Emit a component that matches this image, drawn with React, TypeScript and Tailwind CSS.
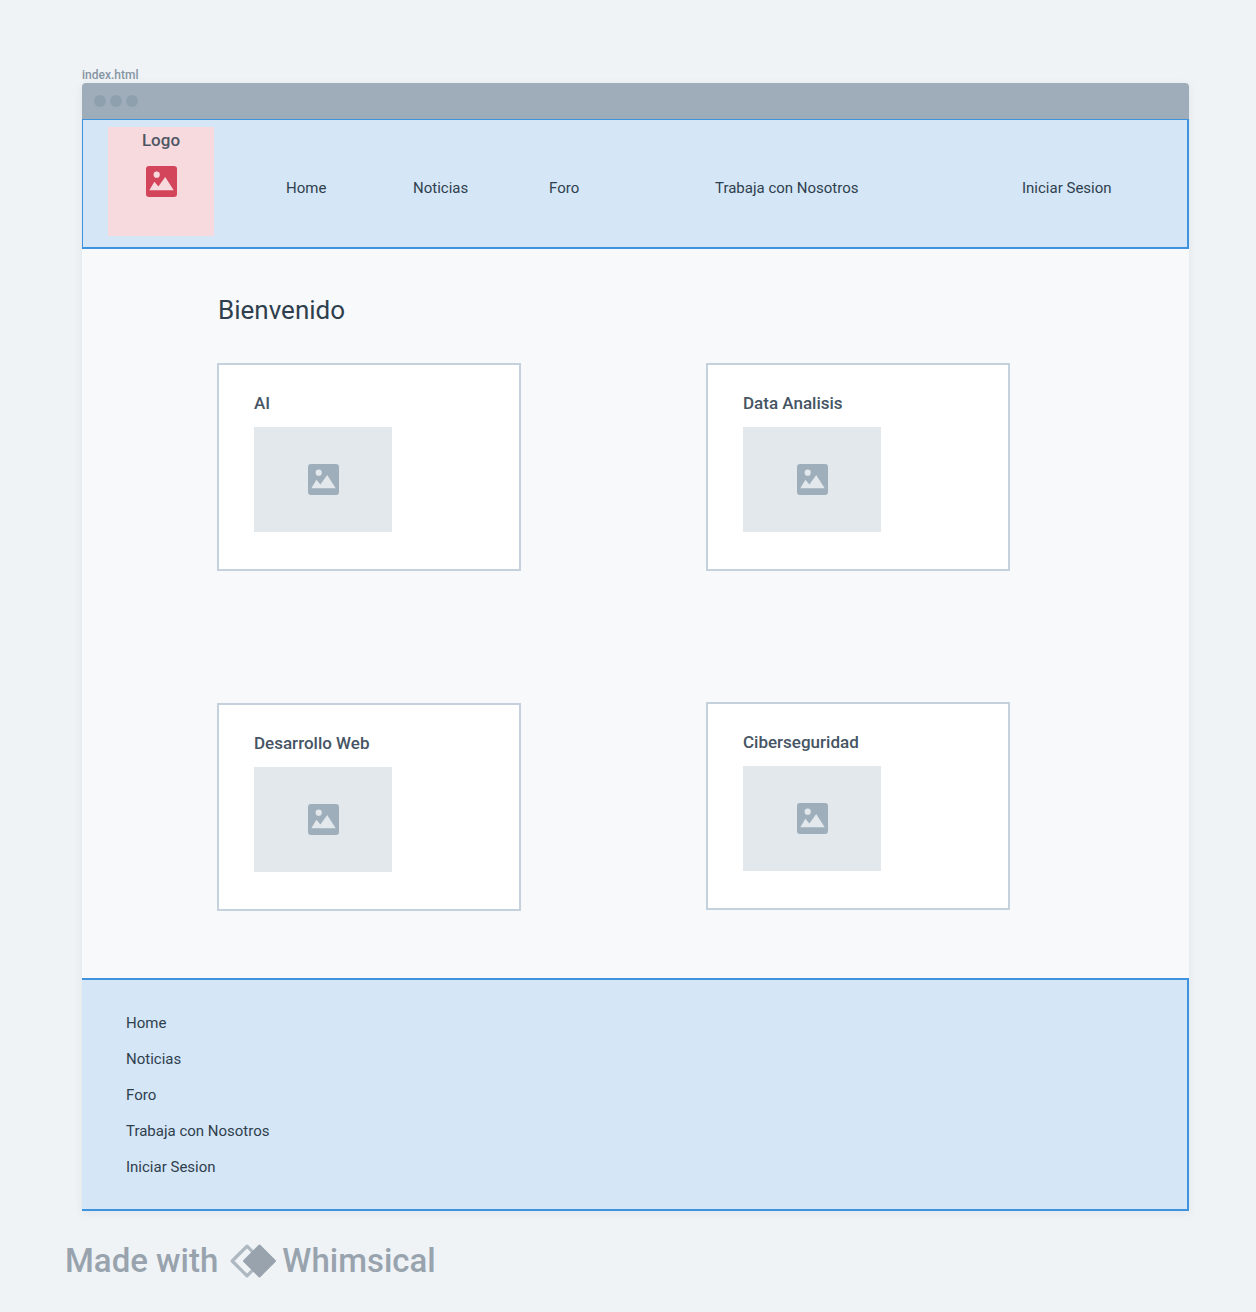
const links = ["Home", "Noticias", "Foro", "Trabaja con Nosotros", "Iniciar Sesion"];

function ImageIcon({ className }: { className: string }) {
  return (
    <svg viewBox="0 0 31 31" className={className} aria-hidden="true">
      <path
        fillRule="evenodd"
        fill="currentColor"
        d="M3 0H28A3 3 0 0 1 31 3V28A3 3 0 0 1 28 31H3A3 3 0 0 1 0 28V3A3 3 0 0 1 3 0ZM10.7 5.6A3.1 3.1 0 1 0 10.7 11.8A3.1 3.1 0 1 0 10.7 5.6ZM3.3 24.2H27.7L19.2 11L12.4 20.4L8.4 15.8Z"
      />
    </svg>
  );
}

function Card({ title }: { title: string }) {
  return (
    <article className="h-[208px] border-2 border-[#c5d1dc] bg-white px-[35px] pt-[26px]">
      <h2 className="text-[17px] leading-6 font-medium text-[#465564]">{title}</h2>
      <div className="mt-3 flex h-[105px] w-[138px] items-center justify-center bg-[#e2e8ec]">
        <ImageIcon className="size-[31px] text-[#9eaebb]" />
      </div>
    </article>
  );
}

export default function App() {
  return (
    <div className="min-h-screen bg-[#eff3f6] pt-[67px] pr-[67px] pb-[32px] pl-[82px] font-['Roboto',sans-serif]">
      <p className="text-xs leading-4 font-medium text-[#8695a3]">index.html</p>

      <div className="rounded-t shadow-[0_2px_8px_rgba(60,80,100,0.08)]">
        <div className="flex h-9 items-center gap-1 rounded-t bg-[#9eadb9] pl-3">
          <span className="size-3 rounded-full bg-[#8e9fae]" />
          <span className="size-3 rounded-full bg-[#8e9fae]" />
          <span className="size-3 rounded-full bg-[#8e9fae]" />
        </div>

        <header className="flex h-[130px] border-t border-r-2 border-b-2 border-l border-[#3d93dd] bg-[#d5e6f6] pt-[7px] pl-[25px]">
          <div className="flex h-[109px] w-[106px] shrink-0 flex-col items-center bg-[#f6dade]">
            <span className="pt-px text-[17px] leading-6 font-medium text-[#4f5663]">Logo</span>
            <ImageIcon className="mt-3.5 size-[31px] text-[#d3455b]" />
          </div>
          <nav className="ml-[72px] grid flex-1 grid-cols-[127fr_136fr_166fr_307fr_165fr] pt-[51px] text-[15px] leading-5 text-[#2f3f4e]">
            {links.map((link) => (
              <a key={link} href="#" className="whitespace-nowrap">
                {link}
              </a>
            ))}
          </nav>
        </header>

        <main className="bg-[#f8f9fb] pt-[45px] pr-[179px] pb-[67px] pl-[135px]">
          <h1 className="pl-px text-[26px] leading-8 text-[#2f3f4e]">Bienvenido</h1>
          <div className="mt-[37px] grid grid-cols-[304fr_304fr] gap-[185px]">
            <div className="flex flex-col gap-[132px]">
              <Card title="AI" />
              <Card title="Desarrollo Web" />
            </div>
            <div className="flex flex-col gap-[131px]">
              <Card title="Data Analisis" />
              <Card title="Ciberseguridad" />
            </div>
          </div>
        </main>

        <footer className="border-y-2 border-r-2 border-[#3d93dd] bg-[#d5e6f6] pt-[33px] pb-8 pl-11">
          <ul className="flex flex-col gap-4 text-[15px] leading-5 text-[#2f3f4e]">
            {links.map((link) => (
              <li key={link}>
                <a href="#">{link}</a>
              </li>
            ))}
          </ul>
        </footer>
      </div>

      <div className="-ml-[17px] mt-[30px] flex items-center text-[33px] leading-10 font-medium text-[#98a3ae]">
        <span>Made with</span>
        <svg viewBox="0 0 46 34" className="mr-1.5 ml-3 h-[34px] w-[46px]" aria-hidden="true">
          <path
            d="M17 2.2L2.2 17L17 31.8L31.8 17Z"
            fill="none"
            stroke="#adb8c1"
            strokeWidth="3.2"
            strokeLinejoin="round"
          />
          <path
            d="M29.5 1.5L14 17L29.5 32.5L45 17Z"
            fill="#98a3ae"
            stroke="#98a3ae"
            strokeWidth="2"
            strokeLinejoin="round"
          />
        </svg>
        <span>Whimsical</span>
      </div>
    </div>
  );
}
